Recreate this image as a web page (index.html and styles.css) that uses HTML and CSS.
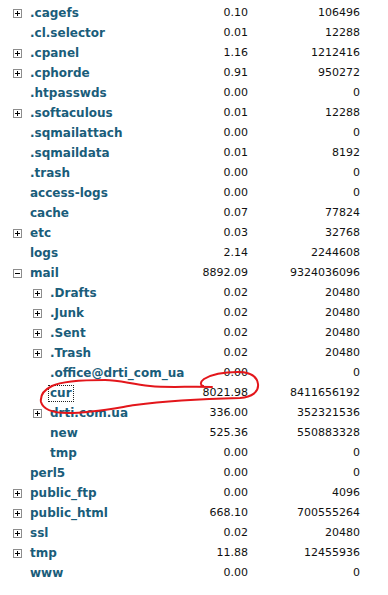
FILE: index.html
```html
<!DOCTYPE html>
<html>
<head>
<meta charset="utf-8">
<link rel="stylesheet" href="styles.css">
</head>
<body>
<div class="tree">
  <div class="row l1"><span class="tg"><svg width="9" height="9"><rect x=".5" y=".5" width="8" height="8" fill="#fff" stroke="#8c8c8c"/><path d="M2 4.5h5M4.5 2v5" stroke="#000"/></svg></span><span class="name">.cagefs</span><span class="n1">0.10</span><span class="n2">106496</span></div>
  <div class="row l1"><span class="tg"></span><span class="name">.cl.selector</span><span class="n1">0.01</span><span class="n2">12288</span></div>
  <div class="row l1"><span class="tg"><svg width="9" height="9"><rect x=".5" y=".5" width="8" height="8" fill="#fff" stroke="#8c8c8c"/><path d="M2 4.5h5M4.5 2v5" stroke="#000"/></svg></span><span class="name">.cpanel</span><span class="n1">1.16</span><span class="n2">1212416</span></div>
  <div class="row l1"><span class="tg"><svg width="9" height="9"><rect x=".5" y=".5" width="8" height="8" fill="#fff" stroke="#8c8c8c"/><path d="M2 4.5h5M4.5 2v5" stroke="#000"/></svg></span><span class="name">.cphorde</span><span class="n1">0.91</span><span class="n2">950272</span></div>
  <div class="row l1"><span class="tg"></span><span class="name">.htpasswds</span><span class="n1">0.00</span><span class="n2">0</span></div>
  <div class="row l1"><span class="tg"><svg width="9" height="9"><rect x=".5" y=".5" width="8" height="8" fill="#fff" stroke="#8c8c8c"/><path d="M2 4.5h5M4.5 2v5" stroke="#000"/></svg></span><span class="name">.softaculous</span><span class="n1">0.01</span><span class="n2">12288</span></div>
  <div class="row l1"><span class="tg"></span><span class="name">.sqmailattach</span><span class="n1">0.00</span><span class="n2">0</span></div>
  <div class="row l1"><span class="tg"></span><span class="name">.sqmaildata</span><span class="n1">0.01</span><span class="n2">8192</span></div>
  <div class="row l1"><span class="tg"></span><span class="name">.trash</span><span class="n1">0.00</span><span class="n2">0</span></div>
  <div class="row l1"><span class="tg"></span><span class="name">access-logs</span><span class="n1">0.00</span><span class="n2">0</span></div>
  <div class="row l1"><span class="tg"></span><span class="name">cache</span><span class="n1">0.07</span><span class="n2">77824</span></div>
  <div class="row l1"><span class="tg"><svg width="9" height="9"><rect x=".5" y=".5" width="8" height="8" fill="#fff" stroke="#8c8c8c"/><path d="M2 4.5h5M4.5 2v5" stroke="#000"/></svg></span><span class="name">etc</span><span class="n1">0.03</span><span class="n2">32768</span></div>
  <div class="row l1"><span class="tg"></span><span class="name">logs</span><span class="n1">2.14</span><span class="n2">2244608</span></div>
  <div class="row l1"><span class="tg"><svg width="9" height="9"><rect x=".5" y=".5" width="8" height="8" fill="#fff" stroke="#8c8c8c"/><path d="M2 4.5h5" stroke="#000"/></svg></span><span class="name">mail</span><span class="n1">8892.09</span><span class="n2">9324036096</span></div>
  <div class="row l2"><span class="tg"><svg width="9" height="9"><rect x=".5" y=".5" width="8" height="8" fill="#fff" stroke="#8c8c8c"/><path d="M2 4.5h5M4.5 2v5" stroke="#000"/></svg></span><span class="name">.Drafts</span><span class="n1">0.02</span><span class="n2">20480</span></div>
  <div class="row l2"><span class="tg"><svg width="9" height="9"><rect x=".5" y=".5" width="8" height="8" fill="#fff" stroke="#8c8c8c"/><path d="M2 4.5h5M4.5 2v5" stroke="#000"/></svg></span><span class="name">.Junk</span><span class="n1">0.02</span><span class="n2">20480</span></div>
  <div class="row l2"><span class="tg"><svg width="9" height="9"><rect x=".5" y=".5" width="8" height="8" fill="#fff" stroke="#8c8c8c"/><path d="M2 4.5h5M4.5 2v5" stroke="#000"/></svg></span><span class="name">.Sent</span><span class="n1">0.02</span><span class="n2">20480</span></div>
  <div class="row l2"><span class="tg"><svg width="9" height="9"><rect x=".5" y=".5" width="8" height="8" fill="#fff" stroke="#8c8c8c"/><path d="M2 4.5h5M4.5 2v5" stroke="#000"/></svg></span><span class="name">.Trash</span><span class="n1">0.02</span><span class="n2">20480</span></div>
  <div class="row l2"><span class="tg"></span><span class="name">.office@drti_com_ua</span><span class="n1">0.00</span><span class="n2">0</span></div>
  <div class="row l2"><span class="tg"></span><span class="name"><span class="focus">cur</span></span><span class="n1">8021.98</span><span class="n2">8411656192</span></div>
  <div class="row l2"><span class="tg"><svg width="9" height="9"><rect x=".5" y=".5" width="8" height="8" fill="#fff" stroke="#8c8c8c"/><path d="M2 4.5h5M4.5 2v5" stroke="#000"/></svg></span><span class="name">drti.com.ua</span><span class="n1">336.00</span><span class="n2">352321536</span></div>
  <div class="row l2"><span class="tg"></span><span class="name">new</span><span class="n1">525.36</span><span class="n2">550883328</span></div>
  <div class="row l2"><span class="tg"></span><span class="name">tmp</span><span class="n1">0.00</span><span class="n2">0</span></div>
  <div class="row l1"><span class="tg"></span><span class="name">perl5</span><span class="n1">0.00</span><span class="n2">0</span></div>
  <div class="row l1"><span class="tg"><svg width="9" height="9"><rect x=".5" y=".5" width="8" height="8" fill="#fff" stroke="#8c8c8c"/><path d="M2 4.5h5M4.5 2v5" stroke="#000"/></svg></span><span class="name">public_ftp</span><span class="n1">0.00</span><span class="n2">4096</span></div>
  <div class="row l1"><span class="tg"><svg width="9" height="9"><rect x=".5" y=".5" width="8" height="8" fill="#fff" stroke="#8c8c8c"/><path d="M2 4.5h5M4.5 2v5" stroke="#000"/></svg></span><span class="name">public_html</span><span class="n1">668.10</span><span class="n2">700555264</span></div>
  <div class="row l1"><span class="tg"><svg width="9" height="9"><rect x=".5" y=".5" width="8" height="8" fill="#fff" stroke="#8c8c8c"/><path d="M2 4.5h5M4.5 2v5" stroke="#000"/></svg></span><span class="name">ssl</span><span class="n1">0.02</span><span class="n2">20480</span></div>
  <div class="row l1"><span class="tg"><svg width="9" height="9"><rect x=".5" y=".5" width="8" height="8" fill="#fff" stroke="#8c8c8c"/><path d="M2 4.5h5M4.5 2v5" stroke="#000"/></svg></span><span class="name">tmp</span><span class="n1">11.88</span><span class="n2">12455936</span></div>
  <div class="row l1"><span class="tg"></span><span class="name">www</span><span class="n1">0.00</span><span class="n2">0</span></div>
</div>
<svg class="scribble" width="388" height="595" viewBox="0 0 388 595">
  <path d="M212 387 C190 386 170 388 150 386 C130 384 120 380 105 380 C85 380 62 381 52 386 C44 390 40 396 41 402 C43 409 52 413 68 413 C90 413 110 409 135 405 C165 401 200 399 240 398 C252 397 259 392 258 384 C257 376 250 372 238 372 C225 372 212 374 204 379 C200 382 200 385 203 386" fill="none" stroke="#e3161b" stroke-width="2" stroke-linecap="round"/>
</svg>
</body>
</html>
```
FILE: styles.css
```css
html, body {
  margin: 0;
  padding: 0;
  background: #fff;
}
body {
  font-family: "DejaVu Sans", Verdana, sans-serif;
  position: relative;
  width: 388px;
  height: 595px;
  overflow: hidden;
}
.tree {
  padding-top: 3px;
  display: flex;
  flex-direction: column;
}
.row {
  display: grid;
  grid-template-columns: 188px 60px 112px;
  height: 20px;
  align-items: center;
}
.row > .tg, .row > .name {
  grid-column: 1;
  grid-row: 1;
}
.tg {
  width: 9px;
  height: 9px;
  display: block;
}
.tg svg { display: block; }
.l1 .tg { margin-left: 13px; }
.l2 .tg { margin-left: 33px; }
.name {
  font-size: 12px;
  font-weight: bold;
  color: #1a5d7a;
  white-space: nowrap;
  line-height: 20px;
}
.l1 .name { padding-left: 30px; }
.l2 .name { padding-left: 50px; }
.focus {
  display: inline-block;
  line-height: 15px;
  outline: 1px dotted #222;
  padding: 0 1px;
  margin-left: -1px;
}
.n1, .n2 {
  font-size: 11px;
  color: #111;
  text-align: right;
  line-height: 20px;
}
.n1 { grid-column: 2; }
.n2 { grid-column: 3; }
.scribble {
  position: absolute;
  left: 0;
  top: 0;
  pointer-events: none;
}
```
